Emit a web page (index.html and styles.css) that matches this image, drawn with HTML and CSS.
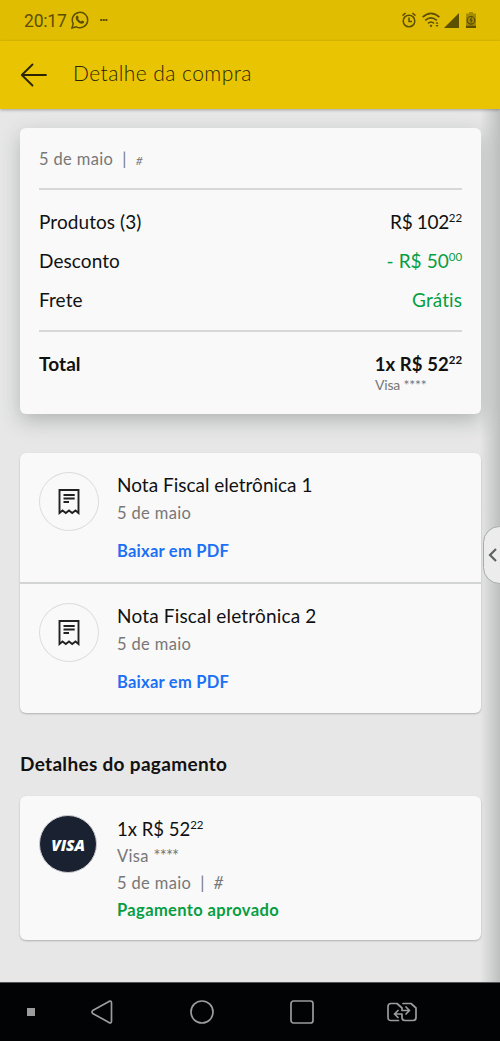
FILE: index.html
```html
<!DOCTYPE html>
<html lang="pt-BR">
<head>
<meta charset="utf-8">
<title>Detalhe da compra</title>
<link rel="stylesheet" href="styles.css">
</head>
<body>
<div class="screen">
  <div class="status">
    <span class="clock">20:17</span>
    <svg class="whats" width="18" height="18" viewBox="0 0 18 18"><path d="M1 17l1.200-4.300A7.700 7.700 0 1 1 5.300 15.800z" fill="none" stroke="currentColor" stroke-width="1.500"/><path d="M5.600 4.900c.7-.7 1.300-.5 1.500.1l.6 1.400c.1.400-.6 1-.6 1.200.6 1.300 1.600 2.200 2.900 2.800.4.100.9-1 1.300-.9l1.700.9c.4.300 0 1.400-.6 1.900-1.200.9-3 .3-4.500-.6C6 10.400 4.400 8 4.700 6.200c.1-.6.500-1 .9-1.300z" fill="currentColor"/></svg>
    <svg class="dots" width="8" height="4" viewBox="0 0 8 4"><path d="M.2 1h2v1.900h-2zM2.800 1h2v1.900h-2zM5.400 1h2v1.900h-2z" fill="currentColor"/></svg>
    <div class="signals">
      <svg width="14" height="16" viewBox="0 0 14 16" fill="none" stroke="currentColor" stroke-width="1.500"><circle cx="7" cy="9" r="5.800"/><path d="M7 5.500V9.500h3M.5 3.600L3.600 1M13.500 3.600L10.400 1"/></svg>
      <svg width="18" height="16" viewBox="0 0 18 16" fill="none" stroke="currentColor" stroke-width="1.600"><path d="M.6 5.100Q9-2.400 17.400 5.100M3.200 8.400Q9 3.200 14.800 8.400M6 11.300Q9 8.700 12 11.300"/><path d="M9 12.600l1.500 1.200L9 15.200l-1.500-1.400zM15 9.700l1.500 2h-3zM15 15l1.500-2h-3z" fill="currentColor" stroke="none"/></svg>
      <svg width="15" height="15" viewBox="0 0 15 15"><path d="M15 0v15H0z" fill="currentColor"/></svg>
      <svg class="battery" width="10" height="16" viewBox="0 0 10 16"><path d="M3 0h4v1.500h3V16H0V1.500h3z" fill="currentColor" opacity=".45"/><path d="M0 13.700h10V16H0z" fill="currentColor"/><circle cx="5" cy="8.300" r="3.800" fill="none" stroke="currentColor" stroke-width="1.200"/><path d="M5.600 4.500L3.400 8.600h1.300v3.500l2.100-4.400H5.600z" fill="currentColor"/></svg>
    </div>
  </div>

  <header class="appbar">
    <svg width="28" height="24" viewBox="0 0 28 24" fill="none" stroke="currentColor" stroke-width="1.800" stroke-linecap="round" stroke-linejoin="round"><path d="M12.500 1.500L1.800 12l10.700 10.500M2 12h24"/></svg>
    <h1>Detalhe da compra</h1>
  </header>

  <main>
    <section class="card summary">
      <div class="order"><span>5 de maio</span><span>|</span><span class="hash">#</span></div>
      <div class="lines">
        <div class="line"><span>Produtos (3)</span><span class="price tight">R$ 102<sup>22</sup></span></div>
        <div class="line"><span>Desconto</span><span class="price green">- R$ 50<sup>00</sup></span></div>
        <div class="line"><span>Frete</span><span class="green">Grátis</span></div>
      </div>
      <div class="total">
        <div class="line bold"><span>Total</span><span class="price">1x R$ 52<sup>22</sup></span></div>
        <div class="method">Visa ****</div>
      </div>
    </section>

    <section class="card invoices">
      <article class="invoice">
        <div class="bubble"><svg width="22" height="26" viewBox="0 0 22 26" fill="none" stroke="currentColor" stroke-width="1.900"><path d="M1.500 1h19v23l-3-2.500L14.200 24 11 21.500 7.800 24l-3.300-2.500-3 2.500z"/><path d="M5.500 6h11.200M5.500 9.500h11.200M5.500 13h5.500"/></svg></div>
        <div class="info"><h2 class="item">Nota Fiscal eletrônica 1</h2><p class="date">5 de maio</p><a class="link">Baixar em PDF</a></div>
      </article>
      <article class="invoice">
        <div class="bubble"><svg width="22" height="26" viewBox="0 0 22 26" fill="none" stroke="currentColor" stroke-width="1.900"><path d="M1.500 1h19v23l-3-2.500L14.200 24 11 21.500 7.800 24l-3.300-2.500-3 2.500z"/><path d="M5.500 6h11.200M5.500 9.500h11.200M5.500 13h5.500"/></svg></div>
        <div class="info"><h2 class="item wide">Nota Fiscal eletrônica 2</h2><p class="date">5 de maio</p><a class="link">Baixar em PDF</a></div>
      </article>
    </section>

    <h2 class="heading">Detalhes do pagamento</h2>

    <section class="card payment">
      <div class="visa"><span>VISA</span></div>
      <div class="info">
        <p class="amount">1x R$ 52<sup>22</sup></p>
        <p class="grey">Visa <span class="stars">****</span></p>
        <p class="grey ref"><span>5 de maio</span><span>|</span><span class="slant">#</span></p>
        <p class="approved">Pagamento aprovado</p>
      </div>
    </section>
    <div class="edge"><svg width="9" height="16" viewBox="0 0 9 16" fill="none" stroke="#606262" stroke-width="2.200"><path d="M8 2L2 8l6 6"/></svg></div>
  </main>

  <nav class="navbar">
    <svg width="8" height="8" viewBox="0 0 8 8"><path d="M0 0h8v8H0z" fill="currentColor"/></svg>
    <svg width="22" height="24" viewBox="0 0 22 24"><path d="M1.700 10.600L18 1.400q2.500-1 2.500 1.500v18.200q0 2.500-2.500 1.500L1.700 13.400q-1.500-1.400 0-2.800z"/></svg>
    <svg width="24" height="24" viewBox="0 0 24 24"><circle cx="12" cy="12" r="11"/></svg>
    <svg width="24" height="24" viewBox="0 0 24 24"><rect x="1" y="1" width="22" height="22" rx="2.500"/></svg>
    <svg width="30" height="20" viewBox="0 0 30 20"><path d="M11.500 18.500H4q-3 0-3-3v-11q0-3 3-3h6l5 4.500v2.500h7M19 5l3.500 3.500L19 12M16 1.500h8l5 4.500v9.500q0 3-3 3h-8q-3 0-3-3V12H7.500M11 8.500L7.500 12l3.500 3.500"/></svg>
  </nav>
</div>
</body>
</html>
```
FILE: styles.css
```css
* { box-sizing: border-box; }
body { margin: 0; font-family: Lato, "Open Sans", sans-serif; color: #111; }
h1, h2, p { margin: 0; font-weight: 400; }
.screen { width: 500px; height: 1041px; display: flex; flex-direction: column; overflow: hidden; background: #e7e7e7; }

.status { height: 41px; display: flex; align-items: center; padding: 0 24px 1px 24px; background: #e0bd00; color: #5c4f00; }
.clock { font: 17.500px/20px Roboto, sans-serif; letter-spacing: -.2px; width: 47px; padding-top: 1px; }
.dots { margin-left: 11px; }
.signals { margin-left: auto; display: flex; align-items: center; gap: 6px; }
.signals svg:nth-child(3) { margin-left: -2px; }
.signals .battery { margin-left: 1px; }

.appbar { height: 68px; display: flex; align-items: center; gap: 25px; padding: 0 0 1px 20px; background: #e8c402; color: #2a2500; box-shadow: 0 1px 3px rgba(0,0,0,.3); z-index: 1; }
.appbar h1 { font-size: 21px; font-weight: 300; letter-spacing: .43px; line-height: 26px; padding-bottom: 3px; }

main { position: relative; height: 873px; padding: 19px 19px 0 20px; background: linear-gradient(90deg, transparent 480px, #bec0c0 500px), #e7e7e7; }
.card { background: #f9f9f9; border-radius: 6px; box-shadow: 0 1px 2px rgba(0,0,0,.24); }
.summary { height: 286px; padding: 0 19px; box-shadow: 0 7px 20px rgba(40,50,50,.27); }
.order { height: 60px; display: flex; align-items: center; gap: 9px; padding-top: 1px; font-size: 16.500px; letter-spacing: .35px; color: #777; }
.hash { font-size: 12px; font-style: italic; padding-top: 3px; }
.lines { height: 144px; border-top: 2px solid #d6d7d7; border-bottom: 2px solid #d6d7d7; padding-top: 12px; }
.line { height: 39px; display: flex; align-items: center; justify-content: space-between; font-size: 19px; letter-spacing: .08px; }
.tight { letter-spacing: -.35px; }
sup { font-size: 11.500px; letter-spacing: -.1px; line-height: 0; vertical-align: baseline; position: relative; top: -.6em; }
.green, .approved { color: #079e43; }
.total { padding-top: 12px; }
.bold { font-weight: 700; }
.bold .price { font-size: 18.500px; }
.method { width: 87px; margin-left: auto; margin-top: -7px; font-size: 14px; line-height: 18px; letter-spacing: -.2px; color: #777; }

.invoices { margin-top: 39px; height: 260px; }
.invoice { height: 129px; display: flex; padding: 19px 19px 0; }
.invoice + .invoice { height: 131px; border-top: 2px solid #d3d4d4; }
.bubble { width: 60px; height: 59px; border: 1px solid #dcdcdc; border-radius: 50%; display: grid; place-items: center; color: #222; }
.info { margin-left: 18px; }
.item { font-size: 19px; line-height: 26px; }
.wide { letter-spacing: .17px; }
.date { font-size: 16.500px; line-height: 22px; margin-top: 4px; color: #777; letter-spacing: .35px; }
.link { display: block; margin-top: 15px; font-size: 16.500px; line-height: 24px; font-weight: 700; letter-spacing: .25px; color: #1b70f5; }

.heading { margin-top: 38px; font-size: 19px; line-height: 26px; font-weight: 700; letter-spacing: .32px; }
.payment { margin-top: 19px; height: 144px; display: flex; padding: 19px; }
.visa { width: 58px; height: 58px; border: 1px solid #c9cbd0; border-radius: 50%; background: #1a2131; color: #fff; display: grid; place-items: center; font: italic 800 15.500px/20px "Open Sans", sans-serif; letter-spacing: -.1px; padding-top: 2px; }
.payment .info { margin-left: 20px; }
.amount { font-size: 18.500px; line-height: 28px; }
.grey, .approved { font-size: 16.500px; line-height: 27px; letter-spacing: .35px; }
.grey { color: #777; }
.stars { letter-spacing: -.8px; }
.slant { font-style: italic; }
.ref { display: flex; gap: 9px; }
.approved { font-weight: 700; letter-spacing: .37px; }
.edge { position: absolute; right: -16px; top: 417px; width: 33px; height: 58px; border: 1px solid #a8aaaa; border-radius: 17px; background: #ececec; display: flex; align-items: center; padding-left: 4px; }

.navbar { height: 59px; background: #020305; border-top: 1px solid #555; color: #9c9c9c; display: grid; grid-template-columns: 62px 80px 119px 81px 119px; align-items: center; justify-items: center; padding-bottom: 1px; }
.navbar svg { fill: none; stroke: currentColor; stroke-width: 1.700; stroke-linecap: round; stroke-linejoin: round; }
```
